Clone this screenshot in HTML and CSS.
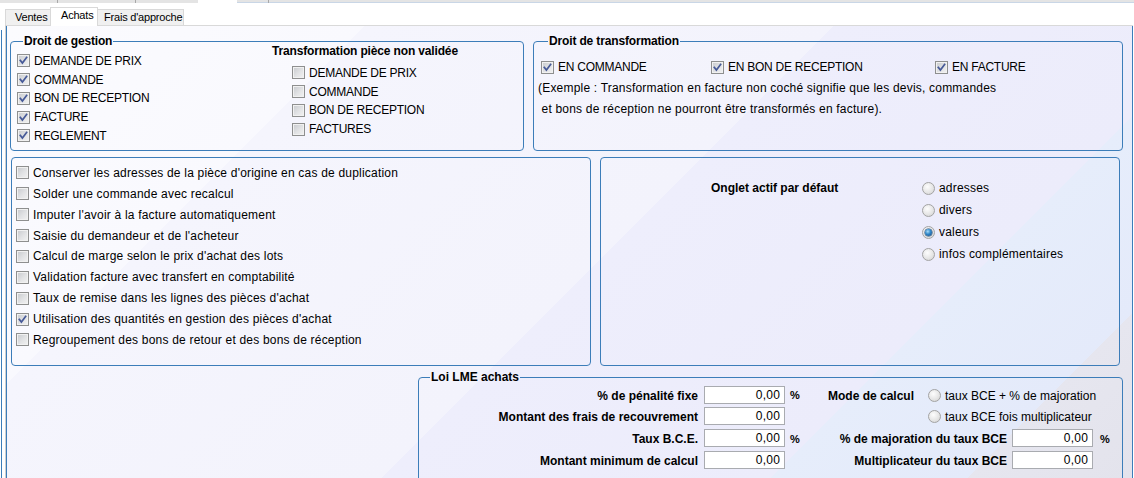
FILE: index.html
```html
<!DOCTYPE html>
<html lang="fr">
<head>
<meta charset="utf-8">
<title>Achats</title>
<link rel="stylesheet" href="styles.css">
</head>
<body>
<div class="topbar">
  <div class="tb tb1"><span class="tick t1"></span><span class="tick t2"></span></div>
  <div class="tb tb2"></div>
  <div class="tb tb3"><span class="tick t3"></span></div>
</div>
<div class="app">
  <div class="edge"></div>
  <div class="main">
    <div class="tabs">
      <div class="tab tab-ventes">Ventes</div>
      <div class="tab tab-achats active">Achats</div>
      <div class="tab tab-frais">Frais d'approche</div>
    </div>
    <div class="page">
      <div class="frame">
        <div class="row1">
          <fieldset class="grp gA">
            <legend>Droit de gestion</legend>
            <div class="gA-body">
              <div class="col-left">
                <div class="ci"><span class="cb"><svg viewBox="0 0 11 11"><path d="M2.3 5.4 L4.4 8 L8.6 2.4"/></svg></span><span class="uc">DEMANDE DE PRIX</span></div>
                <div class="ci"><span class="cb"><svg viewBox="0 0 11 11"><path d="M2.3 5.4 L4.4 8 L8.6 2.4"/></svg></span><span class="uc">COMMANDE</span></div>
                <div class="ci"><span class="cb"><svg viewBox="0 0 11 11"><path d="M2.3 5.4 L4.4 8 L8.6 2.4"/></svg></span><span class="uc">BON DE RECEPTION</span></div>
                <div class="ci"><span class="cb"><svg viewBox="0 0 11 11"><path d="M2.3 5.4 L4.4 8 L8.6 2.4"/></svg></span><span class="uc">FACTURE</span></div>
                <div class="ci"><span class="cb"><svg viewBox="0 0 11 11"><path d="M2.3 5.4 L4.4 8 L8.6 2.4"/></svg></span><span class="uc">REGLEMENT</span></div>
              </div>
              <div class="col-right">
                <div class="subtitle">Transformation pièce non validée</div>
                <div class="sublist">
                  <div class="ci ci2"><span class="cb"></span><span class="uc">DEMANDE DE PRIX</span></div>
                  <div class="ci ci2"><span class="cb"></span><span class="uc">COMMANDE</span></div>
                  <div class="ci ci2"><span class="cb"></span><span class="uc">BON DE RECEPTION</span></div>
                  <div class="ci ci2"><span class="cb"></span><span class="uc">FACTURES</span></div>
                </div>
              </div>
            </div>
          </fieldset>
          <fieldset class="grp gB">
            <legend>Droit de transformation</legend>
            <div class="gB-body">
              <div class="tr-row">
                <div class="ci tr1"><span class="cb"><svg viewBox="0 0 11 11"><path d="M2.3 5.4 L4.4 8 L8.6 2.4"/></svg></span><span class="uc">EN COMMANDE</span></div>
                <div class="ci tr2"><span class="cb"><svg viewBox="0 0 11 11"><path d="M2.3 5.4 L4.4 8 L8.6 2.4"/></svg></span><span class="uc">EN BON DE RECEPTION</span></div>
                <div class="ci tr3"><span class="cb"><svg viewBox="0 0 11 11"><path d="M2.3 5.4 L4.4 8 L8.6 2.4"/></svg></span><span class="uc">EN FACTURE</span></div>
              </div>
              <div class="ex lc">(Exemple : Transformation en facture non coché signifie que les devis, commandes</div>
              <div class="ex lc"> et bons de réception ne pourront être transformés en facture).</div>
            </div>
          </fieldset>
        </div>

        <div class="row2">
          <div class="box opts">
            <div class="ci ci3"><span class="cb"></span><span class="lc">Conserver les adresses de la pièce d'origine en cas de duplication</span></div>
            <div class="ci ci3"><span class="cb"></span><span class="lc">Solder une commande avec recalcul</span></div>
            <div class="ci ci3"><span class="cb"></span><span class="lc">Imputer l'avoir à la facture automatiquement</span></div>
            <div class="ci ci3"><span class="cb"></span><span class="lc">Saisie du demandeur et de l'acheteur</span></div>
            <div class="ci ci3"><span class="cb"></span><span class="lc">Calcul de marge selon le prix d'achat des lots</span></div>
            <div class="ci ci3"><span class="cb"></span><span class="lc">Validation facture avec transfert en comptabilité</span></div>
            <div class="ci ci3"><span class="cb"></span><span class="lc">Taux de remise dans les lignes des pièces d'achat</span></div>
            <div class="ci ci3"><span class="cb"><svg viewBox="0 0 11 11"><path d="M2.3 5.4 L4.4 8 L8.6 2.4"/></svg></span><span class="lc">Utilisation des quantités en gestion des pièces d'achat</span></div>
            <div class="ci ci3"><span class="cb"></span><span class="lc">Regroupement des bons de retour et des bons de réception</span></div>
          </div>
          <div class="box onglet">
            <div class="onglet-lbl">Onglet actif par défaut</div>
            <div class="radios">
              <div class="ri"><span class="rb"></span><span class="lc">adresses</span></div>
              <div class="ri"><span class="rb"></span><span class="lc">divers</span></div>
              <div class="ri"><span class="rb on"><span class="dot"></span></span><span class="lc">valeurs</span></div>
              <div class="ri"><span class="rb"></span><span class="lc">infos complémentaires</span></div>
            </div>
          </div>
        </div>

        <div class="row3">
          <fieldset class="grp lme">
            <legend>Loi LME achats</legend>
            <div class="lme-body">
              <div class="lme-left">
                <div class="lbl">% de pénalité fixe</div><div class="inp">0,00</div><div class="pct">%</div>
                <div class="lbl">Montant des frais de recouvrement</div><div class="inp">0,00</div><div class="pct"></div>
                <div class="lbl">Taux B.C.E.</div><div class="inp">0,00</div><div class="pct">%</div>
                <div class="lbl">Montant minimum de calcul</div><div class="inp">0,00</div><div class="pct"></div>
              </div>
              <div class="lme-right">
                <div class="lr-row"><div class="lbl2 w-mode">Mode de calcul</div><span class="rb rb-mode"></span><span class="rtxt">taux BCE + % de majoration</span></div>
                <div class="lr-row lr-indent"><span class="rb"></span><span class="rtxt">taux BCE fois multiplicateur</span></div>
                <div class="lr-row"><div class="lbl2 w-maj">% de majoration du taux BCE</div><div class="inp inp-r">0,00</div><div class="pct2">%</div></div>
                <div class="lr-row"><div class="lbl2 w-maj">Multiplicateur du taux BCE</div><div class="inp inp-r">0,00</div></div>
              </div>
            </div>
          </fieldset>
        </div>
      </div>
    </div>
  </div>
</div>
</body>
</html>
```

FILE: styles.css
```css
* { box-sizing: border-box; }
html, body { margin: 0; padding: 0; }
body {
  width: 1134px;
  height: 478px;
  overflow: hidden;
  background: #ffffff;
  font-family: "Liberation Sans", Arial, sans-serif;
  font-size: 12px;
  color: #000;
}

/* top strip */
.topbar { display: flex; height: 4px; }
.tb { height: 3px; display: flex; }
.tb1 { width: 198px; background: #e4e4e4; }
.tb2 { width: 39px; background: #ffffff; }
.tb3 { flex: 1; background: #e4e4e4; border-bottom: 1px solid #c9d6e6; height: 3px; }
.tick { width: 1px; height: 3px; background: #a8a8a8; }
.t1 { margin-left: 57px; }
.t2 { margin-left: 77px; }
.t3 { margin-left: 31px; }

.app { display: flex; height: 474px; }
.edge {
  width: 4px;
  margin: 26px 0 0 1px;
  border-left: 1px solid #3c7db9;
  flex: none;
}
.main { width: 1129px; flex: none; }

/* tabs */
.tabs { display: flex; align-items: flex-end; height: 21px; }
.tab {
  height: 16px;
  border: 1px solid #d9d9d9;
  border-bottom: none;
  background: #f0f0f0;
  font-size: 11px;
  letter-spacing: -0.2px;
  line-height: 15px;
  color: #000;
  white-space: nowrap;
}
.tab-ventes { width: 45px; border-right: none; padding-left: 9px; }
.tab-achats { width: 48px; padding-left: 10px; }
.tab-frais { width: 86px; border-left: none; padding-left: 6px; }
.tab.active {
  height: 19px;
  line-height: 14px;
  background: #ffffff;
  margin-bottom: -1px;
  position: relative;
  z-index: 1;
}

/* page */
.page {
  width: 1128px;
  height: 453px;
  border-top: 1px solid #d9d9d9;
  border-left: 1px solid #cfcfcf;
}
.frame {
  height: 100%;
  border-left: 1px solid #3c7db9;
  border-right: 1px solid #3c7db9;
  background: linear-gradient(135deg,
    #fbfbfe 0%, #f9f9fe 22.7%,
    #f5f5fd 22.7%, #f3f3fc 52.4%,
    #eeeefc 52.4%, #ececfb 77.1%,
    #e6edfb 77.1%, #e4eafa 89.6%,
    #e6e6ef 89.6%, #e3e3ec 100%);
  overflow: hidden;
}

/* group boxes */
.grp {
  margin: 0;
  padding: 0;
  min-width: 0;
  border: 1px solid #3c7db9;
  border-radius: 4px;
}
.grp legend {
  font-weight: bold;
  font-size: 12px;
  line-height: 14px;
  padding: 0 1px;
  color: #000;
}
.box {
  border: 1px solid #3c7db9;
  border-radius: 4px;
}

.row1 {
  display: flex;
  gap: 9px;
  height: 117px;
  margin: 8px 0 0 3px;
}
.gA { width: 514px; height: 117px; }
.gB { width: 590px; height: 117px; }
.gA legend { margin-left: 12px; letter-spacing: -0.2px; }
.gB legend { margin-left: 14px; letter-spacing: -0.15px; }

.gA-body { display: flex; padding-left: 6px; }
.col-left { width: 255px; padding-top: 3.6px; }
.col-right { margin-top: -4px; }
.subtitle { font-weight: bold; line-height: 14px; letter-spacing: -0.15px; }
.sublist { padding-left: 20px; margin-top: 5.6px; }

.ci { display: flex; align-items: center; gap: 4px; height: 18.75px; white-space: nowrap; }
.ci2 { height: 18.7px; }
.ci3 { height: 20.875px; }

.uc { letter-spacing: -0.25px; }
.lc { letter-spacing: 0.2px; }

/* checkbox */
.cb {
  width: 13px;
  height: 13px;
  flex: none;
  display: inline-flex;
  border: 1px solid #8e8f8f;
  background: linear-gradient(135deg, #c7c9cd 0%, #e2e3e5 55%, #f2f2f2 100%);
  box-shadow: inset 0 0 0 1px #f1f1f1;
}
.cb svg { width: 11px; height: 11px; display: block; }
.cb path { fill: none; stroke: #475a98; stroke-width: 1.7; stroke-linecap: square; }

/* radio */
.rb {
  width: 13px;
  height: 13px;
  flex: none;
  border-radius: 50%;
  border: 1px solid #a3a3a3;
  background: radial-gradient(circle at 40% 35%, #fdfdfd 0%, #e6e6e6 55%, #cfcfcf 100%);
  display: inline-flex;
  align-items: center;
  justify-content: center;
}
.rb .dot {
  width: 7px;
  height: 7px;
  border-radius: 50%;
  background: radial-gradient(circle at 40% 35%, #a9dcf8 0%, #2f86c8 45%, #16457a 100%);
  box-shadow: 0 0 0 0.5px #23466e;
}

/* droit de transformation */
.gB-body { padding: 8.5px 0 0 4px; }
.tr-row { display: flex; padding-left: 3px; }
.tr-row .ci { height: 21px; }
.tr1 { width: 170px; }
.tr2 { width: 224px; }
.ex { line-height: 21px; white-space: pre; }

/* row 2 */
.row2 {
  display: flex;
  gap: 9px;
  height: 209px;
  margin: 6px 0 0 4px;
}
.opts { width: 580px; padding: 4.5px 0 0 4px; }
.onglet { width: 520px; display: flex; padding: 19px 0 0 110px; }
.onglet-lbl { width: 211px; font-weight: bold; line-height: 22px; height: 22px; }
.ri { display: flex; align-items: center; gap: 4px; height: 22px; white-space: nowrap; }

/* row 3 */
.row3 { margin: 4px 0 0 411px; }
.lme { width: 705px; height: 130px; }
.lme legend { margin-left: 11px; }
.lme-body { display: flex; }
.lme-left {
  display: grid;
  grid-template-columns: 285px 81px 26px;
  grid-auto-rows: 21.67px;
  align-items: center;
}
.lbl { text-align: right; padding: 2px 6px 0 0; font-weight: bold; white-space: nowrap; }
.inp {
  height: 18px;
  border: 1px solid #a9abb0;
  background: #ffffff;
  text-align: right;
  padding-right: 4px;
  line-height: 16px;
  letter-spacing: 0.2px;
}
.pct { padding: 1px 0 0 5px; font-weight: bold; font-size: 11px; }
.lme-right { display: flex; flex-direction: column; }
.lr-row { display: flex; align-items: center; height: 21.67px; white-space: nowrap; }
.lbl2 { text-align: right; font-weight: bold; flex: none; padding-top: 2px; }
.rtxt { padding-top: 2px; }
.lr-row .rb { margin-top: 1px; }
.w-mode { width: 103px; }
.rb-mode { margin-left: 14px; }
.lr-row .rb + .rtxt { margin-left: 4px; }
.lr-indent { padding-left: 117px; }
.w-maj { width: 196px; }
.inp-r { width: 81px; margin-left: 5px; flex: none; }
.pct2 { margin-left: 7px; padding-top: 1px; font-weight: bold; font-size: 11px; }
```
